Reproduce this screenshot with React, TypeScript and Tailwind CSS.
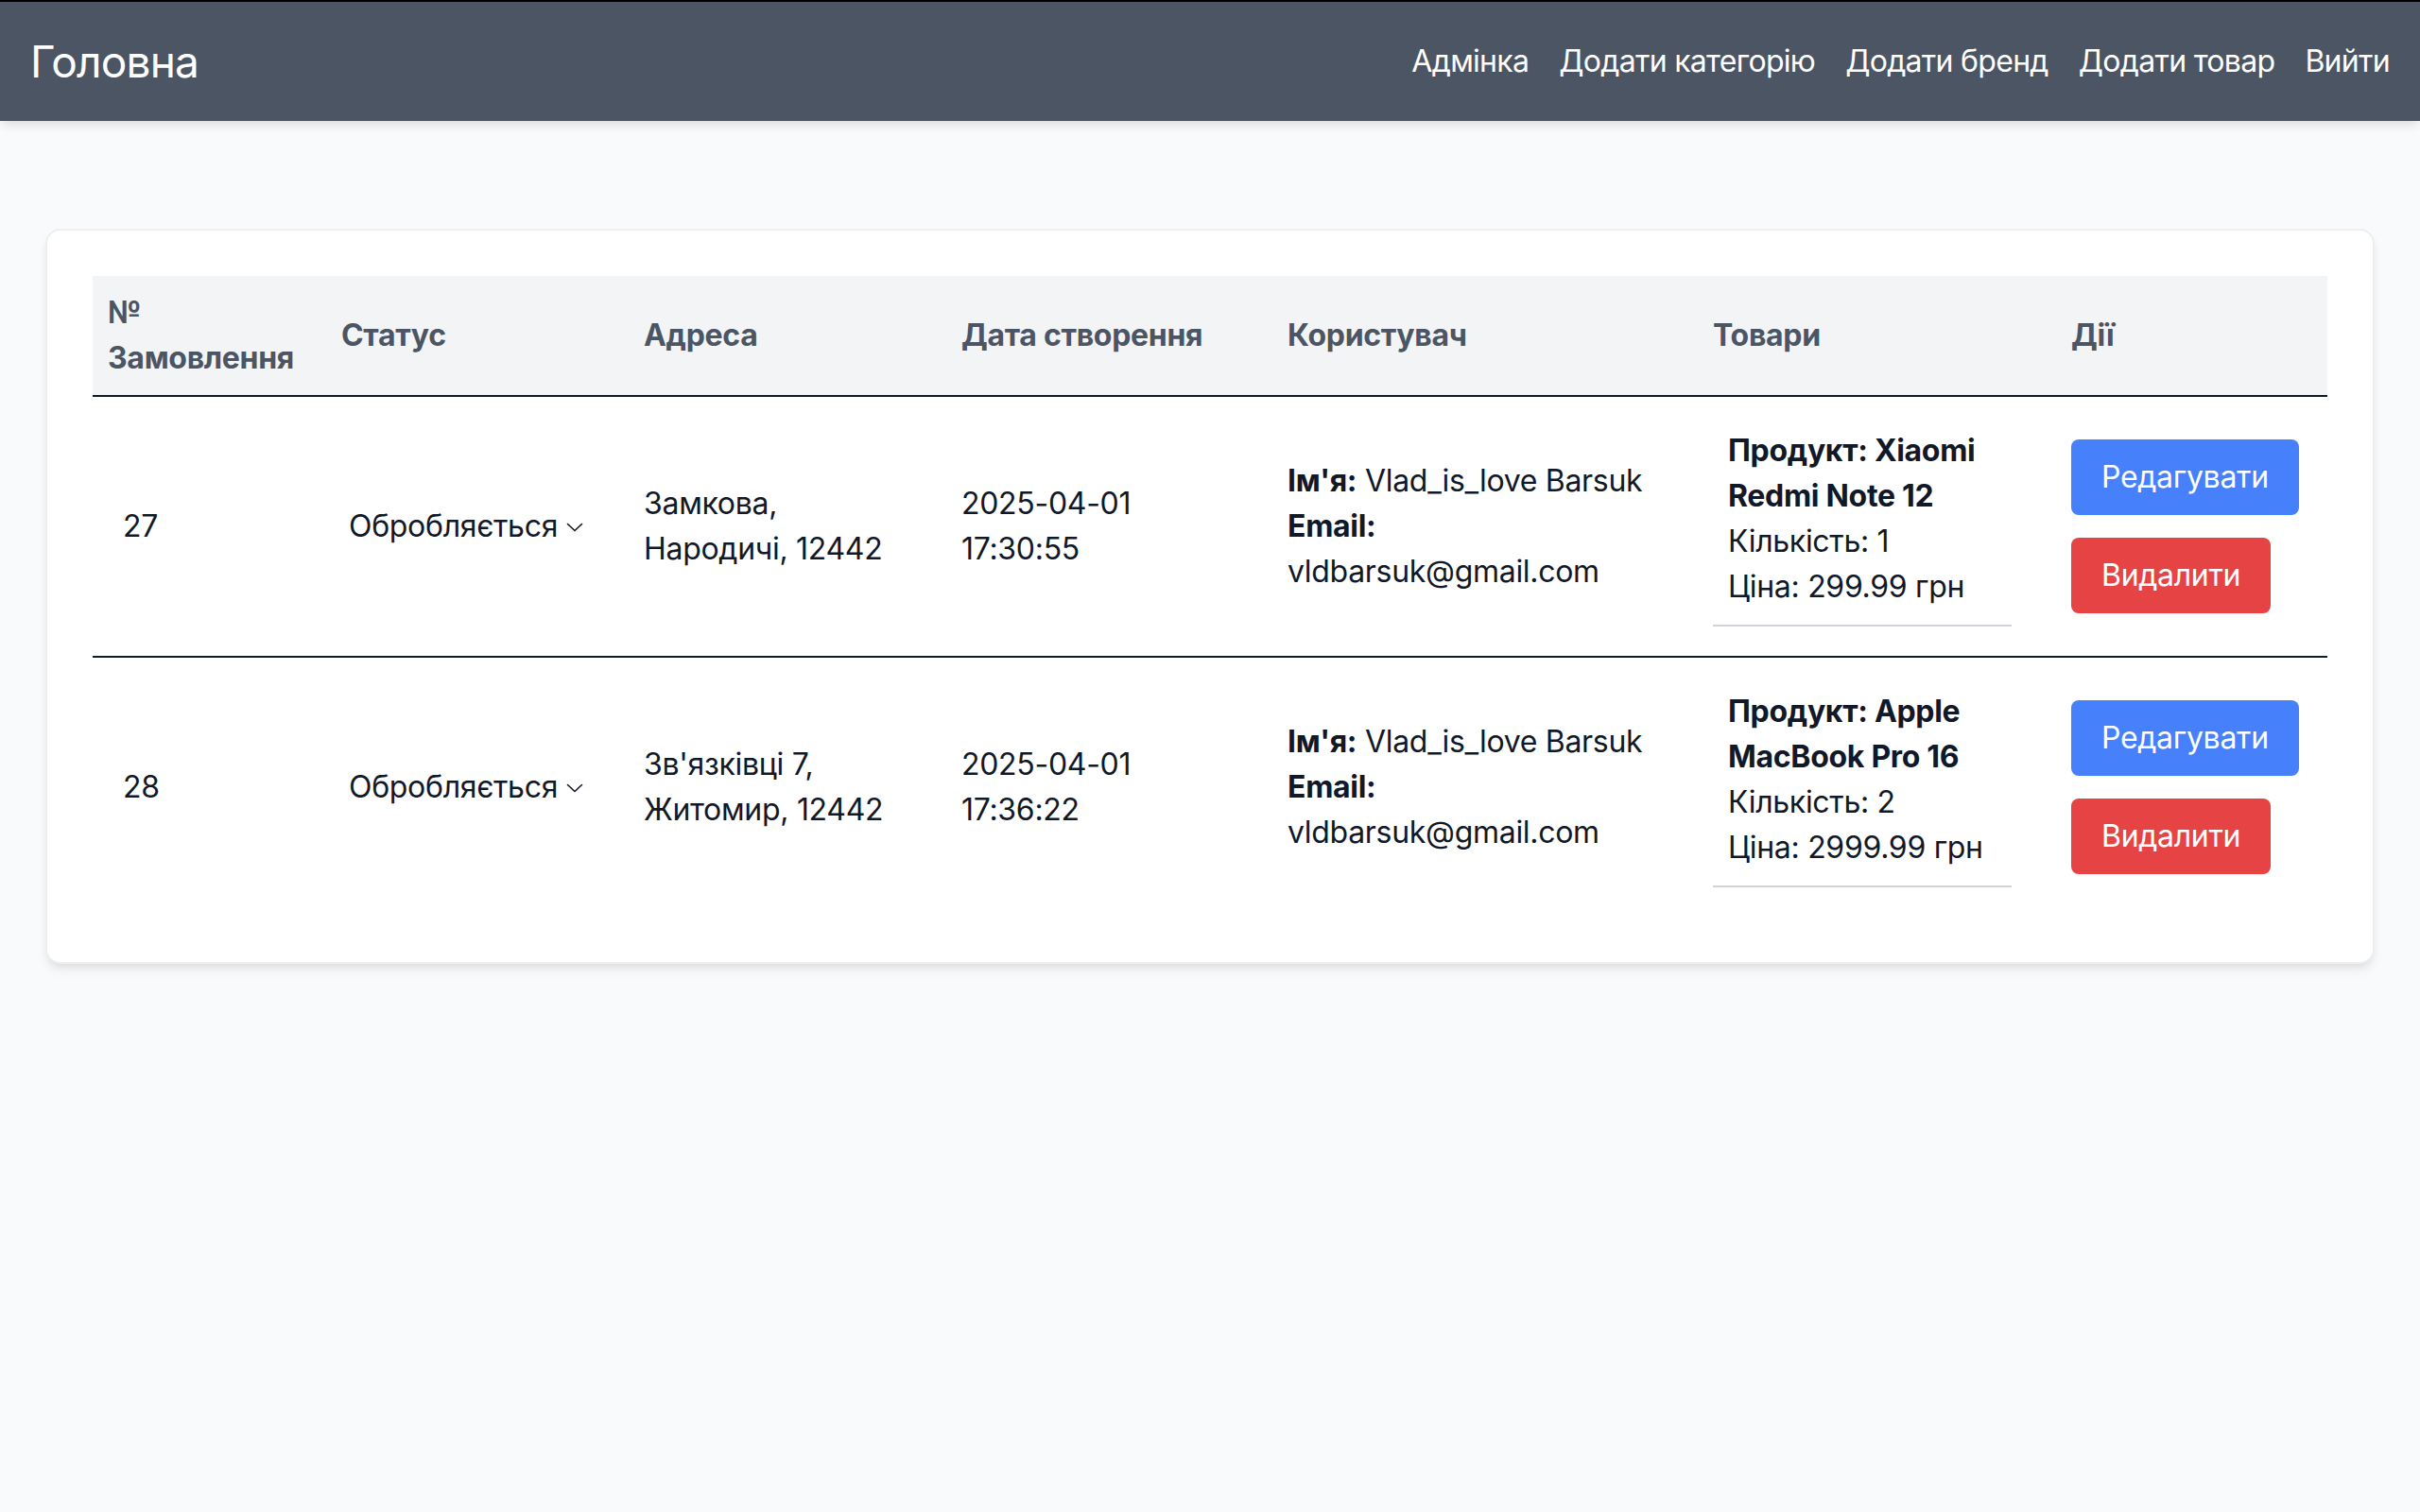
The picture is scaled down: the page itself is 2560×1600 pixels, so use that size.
import React from "react";

type Order = {
  id: number;
  addr1: string;
  addr2: string;
  date: string;
  time: string;
  product: string;
  qty: number;
  price: string;
};

const orders: Order[] = [
  { id: 27, addr1: "Замкова,", addr2: "Народичі, 12442", date: "2025-04-01", time: "17:30:55", product: "Продукт: Xiaomi Redmi Note 12", qty: 1, price: "299.99" },
  { id: 28, addr1: "Зв'язківці 7,", addr2: "Житомир, 12442", date: "2025-04-01", time: "17:36:22", product: "Продукт: Apple MacBook Pro 16", qty: 2, price: "2999.99" },
];

function Chevron() {
  return (
    <svg width="18" height="10" viewBox="0 0 18 10" fill="none" className="ml-[9px] mt-[2px]">
      <path d="M1.5 1.5 L9 8.5 L16.5 1.5" stroke="#111827" strokeWidth="1.6" strokeLinecap="round" strokeLinejoin="round" />
    </svg>
  );
}

export default function App() {
  return (
    <div className="min-h-screen bg-[#f9fafb] font-['Inter',sans-serif] text-[#111827]">
      <nav className="h-[128px] border-t-2 border-black bg-[#4b5563] flex items-center justify-between px-[32px] text-white shadow-[0_6px_10px_-2px_rgba(0,0,0,0.12)]">
        <div className="text-[46px] leading-[64px] tracking-[-0.8px]">Головна</div>
        <div className="flex items-center gap-[32px] text-[32px] leading-[48px] tracking-[-0.7px]">
          <span>Адмінка</span>
          <span>Додати категорію</span>
          <span>Додати бренд</span>
          <span>Додати товар</span>
          <span>Вийти</span>
        </div>
      </nav>
      <main className="px-[48px] pt-[114px]">
        <div className="bg-white rounded-[16px] border-2 border-[#eceef1] p-[48px] shadow-[0_8px_12px_-2px_rgba(0,0,0,0.08),0_4px_8px_-4px_rgba(0,0,0,0.08)]">
          <table className="w-full table-fixed border-collapse text-[32px] leading-[48px] tracking-[-0.3px]">
            <colgroup>
              <col className="w-[247px]" />
              <col className="w-[320px]" />
              <col className="w-[336px]" />
              <col className="w-[345px]" />
              <col className="w-[450px]" />
              <col className="w-[379px]" />
              <col className="w-[287px]" />
            </colgroup>
            <thead>
              <tr className="bg-[#f3f4f6] border-b-2 border-[#111827] text-[#4b5563]">
                <th className="px-[16px] py-[15px] text-left font-bold align-middle">№ Замовлення</th>
                <th className="px-[16px] py-[15px] text-left font-bold align-middle">Статус</th>
                <th className="px-[16px] py-[15px] text-left font-bold align-middle">Адреса</th>
                <th className="px-[16px] py-[15px] text-left font-bold align-middle">Дата створення</th>
                <th className="px-[16px] py-[15px] text-left font-bold align-middle">Користувач</th>
                <th className="px-[16px] py-[15px] text-left font-bold align-middle">Товари</th>
                <th className="px-[16px] py-[15px] text-left font-bold align-middle">Дії</th>
              </tr>
            </thead>
            <tbody>
              {orders.map((o, i) => (
                <tr key={o.id} className={i < orders.length - 1 ? "border-b-2 border-[#111827]" : ""}>
                  <td className="pl-[32px] pr-[16px] py-[31px] align-middle">{o.id}</td>
                  <td className="pl-[24px] pr-[16px] py-[31px] align-middle">
                    <div className="flex items-center">
                      <span>Обробляється</span>
                      <Chevron />
                    </div>
                  </td>
                  <td className="px-[16px] py-[31px] align-middle">
                    <div>{o.addr1}</div>
                    <div>{o.addr2}</div>
                  </td>
                  <td className="px-[16px] py-[31px] align-middle">
                    <div>{o.date}</div>
                    <div>{o.time}</div>
                  </td>
                  <td className="px-[16px] py-[31px] align-middle">
                    <div>
                      <span className="font-bold">Ім'я:</span> Vlad_is_love Barsuk
                    </div>
                    <div className="font-bold">Email:</div>
                    <div>vldbarsuk@gmail.com</div>
                  </td>
                  <td className="px-[16px] py-[31px] align-middle">
                    <div className="w-[316px] pl-[16px] pr-[8px] pt-[2px] pb-[16px] border-b-2 border-[#d1d5db]">
                      <div className="font-bold">{o.product}</div>
                      <div>Кількість: {o.qty}</div>
                      <div>Ціна: {o.price} грн</div>
                    </div>
                  </td>
                  <td className="px-[16px] py-[31px] align-middle">
                    <div className="flex flex-col items-start gap-[24px]">
                      <button className="h-[80px] px-[32px] rounded-[8px] bg-[#4680fb] text-white text-[32px] leading-[48px] tracking-[-0.3px]">Редагувати</button>
                      <button className="h-[80px] px-[32px] rounded-[8px] bg-[#e64444] text-white text-[32px] leading-[48px] tracking-[-0.3px]">Видалити</button>
                    </div>
                  </td>
                </tr>
              ))}
            </tbody>
          </table>
        </div>
      </main>
    </div>
  );
}
